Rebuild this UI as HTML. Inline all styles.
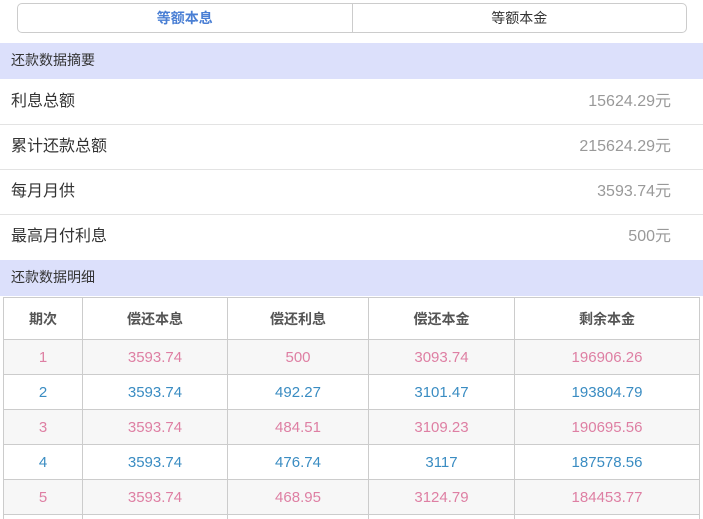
<!DOCTYPE html>
<html><head><meta charset="utf-8"><style>
*{margin:0;padding:0;box-sizing:border-box}
html,body{width:703px;height:519px;overflow:hidden}
body{background:#fff;font-family:"Liberation Sans","Noto Sans CJK SC",sans-serif;position:relative}
.tabs{position:absolute;left:17px;top:3px;width:670px;height:30px;border:1px solid #ccc;border-radius:5px;display:flex;font-size:14px}
.tabs div{flex:1;text-align:center;line-height:28px}
.tabs div:first-child{color:#4a7fd4;font-weight:bold;border-right:1px solid #ccc}
.tabs div:last-child{color:#333}
.hd{position:absolute;left:0;width:703px;height:36px;background:#dce0fb;color:#333;font-size:14px;line-height:34px;padding-left:11px}
.row{position:absolute;left:0;width:703px;height:45px;border-bottom:1px solid #e3e3e3;font-size:16px;line-height:44px;padding:0 32px 0 11px;display:flex;justify-content:space-between}
.row span:first-child{color:#333}.row span:last-child{color:#999}
.wrap{position:absolute;left:3px;top:297px;width:697px;height:222px;overflow:hidden}
table{width:697px;border-collapse:collapse;font-size:15px}
td,th{border:1px solid #ccc;text-align:center}
th{height:42px;color:#555;font-size:14px;font-weight:bold}
td{height:35px}
tr.p td{color:#de7fa3;background:#f7f7f7}
tr.b td{color:#3a8cc2}
</style></head><body>
<div class="tabs"><div>等额本息</div><div>等额本金</div></div>
<div class="hd" style="top:43px">还款数据摘要</div>
<div class="row" style="top:80px"><span>利息总额</span><span>15624.29元</span></div>
<div class="row" style="top:125px"><span>累计还款总额</span><span>215624.29元</span></div>
<div class="row" style="top:170px"><span>每月月供</span><span>3593.74元</span></div>
<div class="row" style="top:215px;border:none"><span>最高月付利息</span><span>500元</span></div>
<div class="hd" style="top:260px">还款数据明细</div>
<div class="wrap"><table>
<tr><th style="width:79px">期次</th><th style="width:145px">偿还本息</th><th style="width:141px">偿还利息</th><th style="width:146px">偿还本金</th><th>剩余本金</th></tr>
<tr class="p"><td>1</td><td>3593.74</td><td>500</td><td>3093.74</td><td>196906.26</td></tr>
<tr class="b"><td>2</td><td>3593.74</td><td>492.27</td><td>3101.47</td><td>193804.79</td></tr>
<tr class="p"><td>3</td><td>3593.74</td><td>484.51</td><td>3109.23</td><td>190695.56</td></tr>
<tr class="b"><td>4</td><td>3593.74</td><td>476.74</td><td>3117</td><td>187578.56</td></tr>
<tr class="p"><td>5</td><td>3593.74</td><td>468.95</td><td>3124.79</td><td>184453.77</td></tr>
<tr class="b"><td>6</td><td>3593.74</td><td>461.13</td><td>3132.61</td><td>181321.16</td></tr>
</table></div>
</body></html>
